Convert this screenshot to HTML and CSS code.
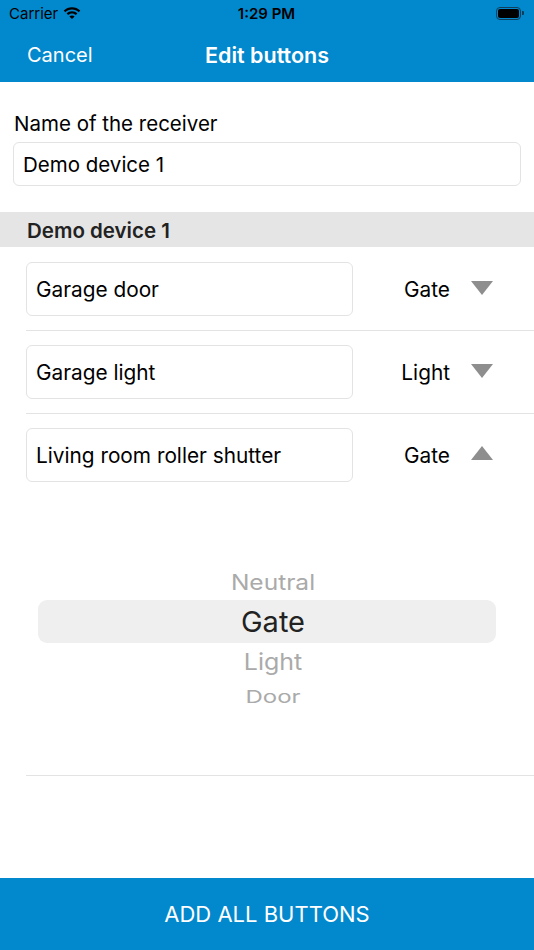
FILE: index.html
```html
<!DOCTYPE html>
<html lang="en">
<head>
  <meta charset="UTF-8">
  <title>Edit buttons</title>
  <link rel="stylesheet" href="styles.css">
</head>
<body>

  <!-- Blue header: status bar + navigation -->
  <div class="header">
    <div class="status-bar">
      <div class="carrier">
        Carrier
        <svg class="wifi" width="18" height="13" viewBox="0 0 18 13">
          <path d="M9 1.2c3.2 0 6.1 1.2 8.3 3.3l-1.6 1.7C13.9 4.5 11.6 3.5 9 3.5S4.1 4.5 2.3 6.2L.7 4.5C2.9 2.4 5.8 1.2 9 1.2z" fill="#000"/>
          <path d="M9 5.3c2.1 0 4 .8 5.4 2.1l-1.6 1.7C11.8 8.2 10.5 7.6 9 7.6s-2.8.6-3.8 1.5L3.6 7.4C5 6.1 6.9 5.3 9 5.3z" fill="#000"/>
          <path d="M9 9.4c1 0 1.9.4 2.6 1L9 13l-2.6-2.6c.7-.6 1.6-1 2.6-1z" fill="#000"/>
        </svg>
      </div>
      <div class="clock">1:29 PM</div>
      <div class="battery">
        <div class="battery-body"><div class="battery-level"></div></div>
        <div class="battery-nub"></div>
      </div>
    </div>
    <div class="nav-bar">
      <span class="nav-cancel">Cancel</span>
      <span class="nav-title">Edit buttons</span>
    </div>
  </div>

  <!-- Receiver name -->
  <div class="receiver">
    <label class="field-label">Name of the receiver</label>
    <div class="text-input">Demo device 1</div>
  </div>

  <div class="section-header">Demo device 1</div>

  <!-- Button rows -->
  <div class="button-list">
    <div class="button-row">
      <div class="row-input">Garage door</div>
      <div class="row-type">Gate</div>
      <div class="arrow down"></div>
    </div>
    <div class="button-row">
      <div class="row-input">Garage light</div>
      <div class="row-type">Light</div>
      <div class="arrow down"></div>
    </div>
    <div class="button-row open">
      <div class="row-input">Living room roller shutter</div>
      <div class="row-type">Gate</div>
      <div class="arrow up"></div>
    </div>

    <!-- Picker wheel -->
    <div class="picker">
      <div class="picker-item far">Neutral</div>
      <div class="picker-item selected">Gate</div>
      <div class="picker-item near">Light</div>
      <div class="picker-item farther">Door</div>
    </div>
  </div>

  <div class="footer-btn">ADD ALL BUTTONS</div>

</body>
</html>
```

FILE: styles.css
```css
* {
  box-sizing: border-box;
  margin: 0;
  padding: 0;
}

body {
  font-family: Inter, "Noto Sans", sans-serif;
  background-color: #ffffff;
  color: #000;
  height: 950px;
  display: flex;
  flex-direction: column;
  overflow: hidden;
}

/* Header */
.header {
  background-color: #0288cd;
  color: #fff;
}

.status-bar {
  height: 28px;
  display: flex;
  align-items: center;
  justify-content: space-between;
  padding: 0 10px 0 9px;
  color: #000;
  font-size: 15px;
}

.carrier {
  display: flex;
  align-items: center;
  gap: 5px;
  width: 110px;
  margin-top: -1px;
}

.wifi {
  margin-top: -3px;
}

.clock {
  font-weight: 600;
  margin-top: -1px;
}

.battery {
  width: 110px;
  display: flex;
  justify-content: flex-end;
  align-items: center;
  margin-top: -2px;
}

.battery-body {
  width: 25px;
  height: 13px;
  border: 1px solid #0f3f5a;
  border-radius: 4px;
  padding: 1px;
}

.battery-level {
  width: 100%;
  height: 100%;
  background: #000;
  border-radius: 2px;
}

.battery-nub {
  width: 2px;
  height: 4px;
  background: #0f3f5a;
  border-radius: 0 1px 1px 0;
  margin-left: 1px;
}

.nav-bar {
  height: 54px;
  display: flex;
  align-items: center;
  position: relative;
  font-size: 21px;
}

.nav-cancel {
  margin-left: 27px;
  font-size: 20px;
}

.nav-title {
  position: absolute;
  left: 0;
  right: 0;
  text-align: center;
  font-weight: 600;
  font-size: 21.5px;
}

/* Receiver */
.receiver {
  padding: 29px 13px 0 13px;
}

.field-label {
  display: block;
  font-size: 20.5px;
  line-height: 26px;
  margin-left: 1px;
}

.text-input {
  margin-top: 5px;
  height: 44px;
  border: 1px solid #e3e3e3;
  border-radius: 6px;
  padding: 1px 9px 0;
  display: flex;
  align-items: center;
  font-size: 20.5px;
}

.section-header {
  margin-top: 26px;
  height: 35px;
  background-color: #e5e5e5;
  padding: 1px 0 0 27px;
  display: flex;
  align-items: center;
  font-size: 20.5px;
  font-weight: 600;
  color: #222;
}

/* Rows */
.button-list {
  margin-left: 26px;
  padding-top: 1px;
}

.button-row {
  display: flex;
  align-items: center;
  padding: 14px 0;
  border-bottom: 1px solid #e3e3e3;
}

.button-row.open {
  border-bottom: none;
}

.row-input {
  width: 327px;
  height: 54px;
  border: 1px solid #e3e3e3;
  border-radius: 6px;
  padding: 1px 9px 0;
  display: flex;
  align-items: center;
  font-size: 20.8px;
}

.row-type {
  width: 97px;
  text-align: right;
  font-size: 20.8px;
  padding-top: 1px;
}

.arrow {
  width: 0;
  height: 0;
  margin-left: 21px;
  border-left: 11px solid transparent;
  border-right: 11px solid transparent;
}

.arrow.down {
  border-top: 14px solid #8e8e8e;
  margin-top: -2px;
}

.arrow.up {
  border-bottom: 14px solid #8e8e8e;
  margin-top: -4px;
}

/* Picker */
.picker {
  padding: 69px 38px 60px 12px;
  border-bottom: 1px solid #e3e3e3;
  display: flex;
  flex-direction: column;
  align-items: stretch;
  text-align: center;
}

.picker-item {
  height: 34px;
  display: flex;
  align-items: center;
  justify-content: center;
  padding-left: 12px;
  color: #aaa;
}

.picker-item.far {
  font-size: 24.5px;
  margin-bottom: 1px;
  transform: scaleY(0.88);
}

.picker-item.selected {
  height: 43px;
  background-color: #efefef;
  border-radius: 9px;
  font-size: 29px;
  color: #222;
  margin-bottom: 2px;
}

.picker-item.near {
  font-size: 25px;
  transform: scaleY(0.92);
}

.picker-item.farther {
  height: 36px;
  font-size: 24px;
  transform: scaleY(0.7);
}

/* Footer button */
.footer-btn {
  margin-top: auto;
  height: 72px;
  background-color: #0288cd;
  color: #fff;
  display: flex;
  align-items: center;
  justify-content: center;
  font-size: 22px;
}
```
